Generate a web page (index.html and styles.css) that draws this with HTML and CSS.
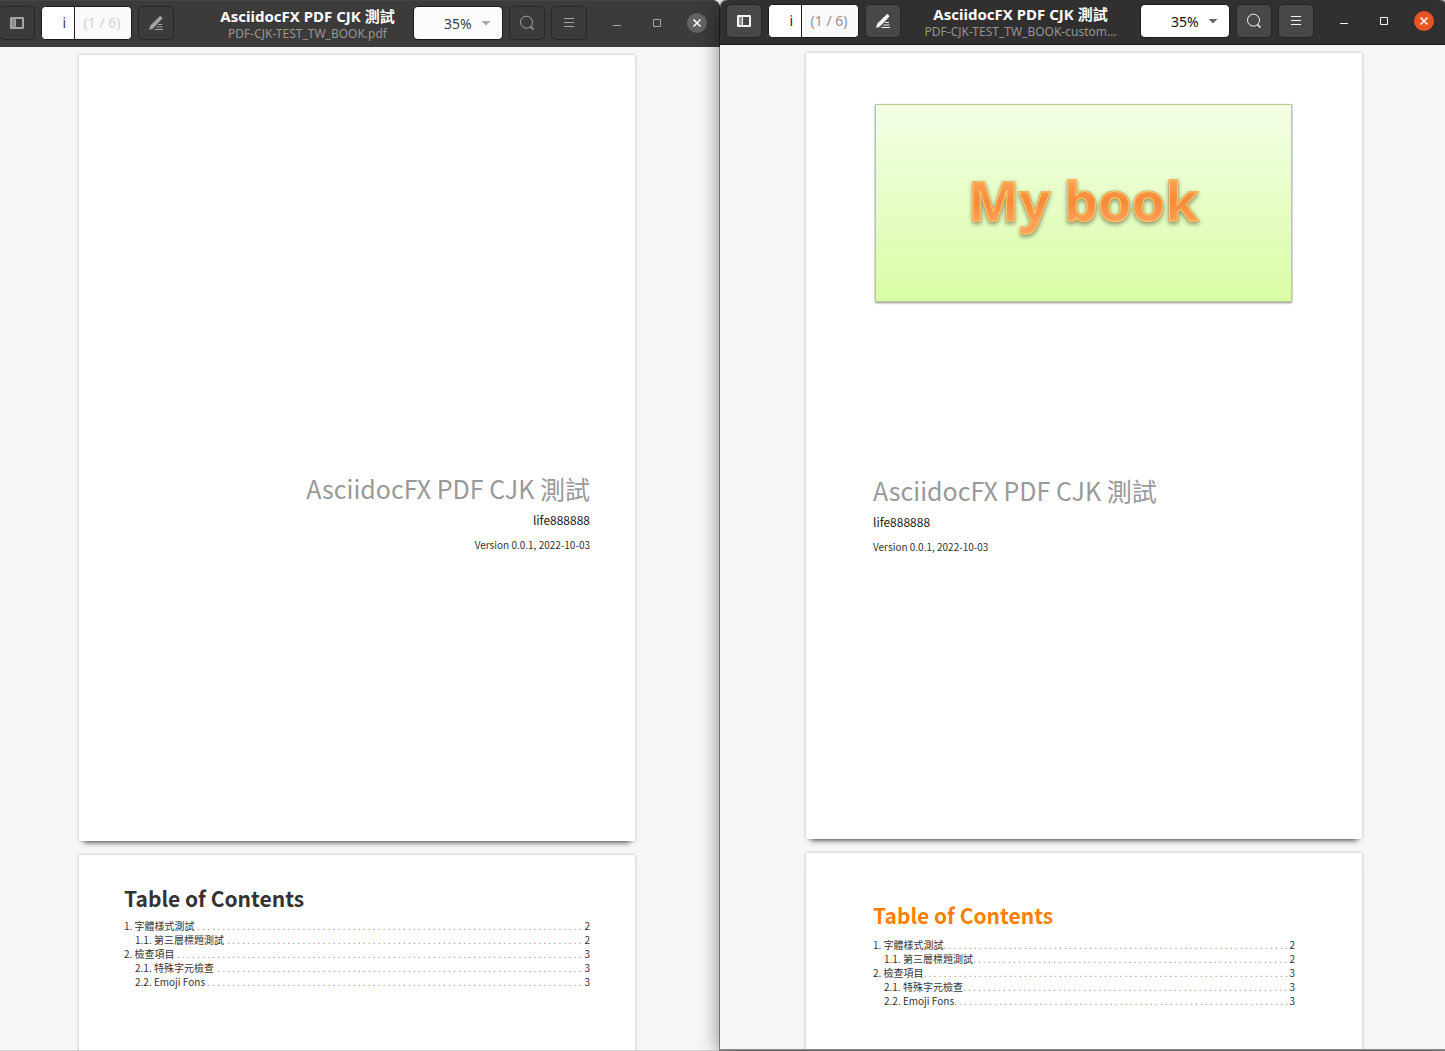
FILE: index.html
```html
<!DOCTYPE html>
<html lang="zh-Hant">
<head>
<meta charset="utf-8">
<title>AsciidocFX PDF CJK 測試</title>
<link rel="stylesheet" href="styles.css">
</head>
<body>
<svg width="0" height="0" class="sprite" aria-hidden="true">
  <symbol id="sidebar" viewBox="0 0 16 16">
    <path fill-rule="evenodd" d="M1 3q0-1 1-1h12q1 0 1 1v10q0 1-1 1H2q-1 0-1-1zM7 4v8h6V4z" fill="currentColor"/>
    <path d="M3 4h3v8H3z" class="sidebar-strip"/>
  </symbol>
  <symbol id="annotate" viewBox="0 0 16 16">
    <path d="M1 15l1.200-4.200L11.500 1.500q.8-.8 1.600 0l.9.900q.8.800 0 1.600L5 13.500z" fill="currentColor"/>
    <path d="M10 9.500h4M8.500 12h6M6.500 14.500h8.500" stroke="currentColor" fill="none"/>
  </symbol>
  <symbol id="search" viewBox="0 0 16 16">
    <circle cx="7.500" cy="7.200" r="6" stroke="currentColor" fill="none"/>
    <path d="M11.500 11.500l3 3" stroke="currentColor" stroke-width="1.500"/>
  </symbol>
  <symbol id="menu" viewBox="0 0 16 16">
    <path d="M3 3.500h10M3 7.500h10M3 11.500h10" stroke="currentColor"/>
  </symbol>
  <symbol id="minimize" viewBox="0 0 16 16"><path d="M4 10.500h8" stroke="currentColor"/></symbol>
  <symbol id="maximize" viewBox="0 0 16 16"><path d="M4.500 4.500h7v7h-7z" stroke="currentColor" fill="none"/></symbol>
  <symbol id="close" viewBox="0 0 16 16"><path d="M4.500 4.500l7 7M11.500 4.500l-7 7" stroke="currentColor" stroke-width="1.600"/></symbol>
</svg>
<div class="desktop">
  <main class="window inactive">
    <header class="bar">
      <button class="tool" aria-label="Side pane"><svg><use href="#sidebar"/></svg></button>
      <div class="pager"><input id="page-a" value="i" aria-label="Page"><label for="page-a">(1 / 6)</label></div>
      <button class="tool" aria-label="Annotate"><svg><use href="#annotate"/></svg></button>
      <div class="caption"><h1>AsciidocFX PDF CJK 測試</h1><p>PDF-CJK-TEST_TW_BOOK.pdf</p></div>
      <div class="zoom"><select aria-label="Zoom"><option>35%</option></select></div>
      <button class="tool" aria-label="Find"><svg><use href="#search"/></svg></button>
      <button class="tool" aria-label="Menu"><svg><use href="#menu"/></svg></button>
      <div class="controls">
        <button aria-label="Minimize"><svg><use href="#minimize"/></svg></button>
        <button aria-label="Maximize"><svg><use href="#maximize"/></svg></button>
        <button aria-label="Close"><span class="disc"><svg><use href="#close"/></svg></span></button>
      </div>
    </header>
    <div class="viewer">
      <article class="sheet title-sheet">
        <h2>AsciidocFX PDF CJK 測試</h2>
        <p class="author">life888888</p>
        <p class="version">Version 0.0.1, 2022-10-03</p>
      </article>
      <article class="sheet toc">
        <h2>Table of Contents</h2>
        <ol>
          <li><a href="#">1. 字體樣式測試</a><span class="dots">. . . . . . . . . . . . . . . . . . . . . . . . . . . . . . . . . . . . . . . . . . . . . . . . . . . . . . . . . . . . . . . . . . . . . . . . . . . . .</span><span>2</span></li>
          <li class="sub"><a href="#">1.1. 第三層標題測試</a><span class="dots">. . . . . . . . . . . . . . . . . . . . . . . . . . . . . . . . . . . . . . . . . . . . . . . . . . . . . . . . . . . . . . . . . . . . . . .</span><span>2</span></li>
          <li><a href="#">2. 檢查項目</a><span class="dots">. . . . . . . . . . . . . . . . . . . . . . . . . . . . . . . . . . . . . . . . . . . . . . . . . . . . . . . . . . . . . . . . . . . . . . . . . . . . . . . . .</span><span>3</span></li>
          <li class="sub"><a href="#">2.1. 特殊字元檢查</a><span class="dots">. . . . . . . . . . . . . . . . . . . . . . . . . . . . . . . . . . . . . . . . . . . . . . . . . . . . . . . . . . . . . . . . . . . . . . . . .</span><span>3</span></li>
          <li class="sub"><a href="#">2.2. Emoji Fons</a><span class="dots">. . . . . . . . . . . . . . . . . . . . . . . . . . . . . . . . . . . . . . . . . . . . . . . . . . . . . . . . . . . . . . . . . . . . . . . . . . .</span><span>3</span></li>
        </ol>
      </article>
    </div>
  </main>
  <section class="window active">
    <header class="bar">
      <button class="tool" aria-label="Side pane"><svg><use href="#sidebar"/></svg></button>
      <div class="pager"><input id="page-b" value="i" aria-label="Page"><label for="page-b">(1 / 6)</label></div>
      <button class="tool" aria-label="Annotate"><svg><use href="#annotate"/></svg></button>
      <div class="caption"><h1>AsciidocFX PDF CJK 測試</h1><p>PDF-CJK-TEST_TW_BOOK-custom…</p></div>
      <div class="zoom"><select aria-label="Zoom"><option>35%</option></select></div>
      <button class="tool" aria-label="Find"><svg><use href="#search"/></svg></button>
      <button class="tool" aria-label="Menu"><svg><use href="#menu"/></svg></button>
      <div class="controls">
        <button aria-label="Minimize"><svg><use href="#minimize"/></svg></button>
        <button aria-label="Maximize"><svg><use href="#maximize"/></svg></button>
        <button aria-label="Close"><span class="disc"><svg><use href="#close"/></svg></span></button>
      </div>
    </header>
    <div class="viewer">
      <article class="sheet title-sheet custom">
        <div class="cover">
          <svg viewBox="0 0 416 196" role="img" aria-label="My book">
            <defs>
              <linearGradient id="ink" x1="0" y1="0" x2="0" y2="1">
                <stop offset="0.250" stop-color="#ffa057"/><stop offset="0.520" stop-color="#f58a38"/><stop offset="0.800" stop-color="#ffa05a"/>
              </linearGradient>
            </defs>
            <text x="208" y="116" text-anchor="middle" class="wordart-edge">My book</text>
            <text x="208" y="116" text-anchor="middle" class="wordart">My book</text>
          </svg>
        </div>
        <h2>AsciidocFX PDF CJK 測試</h2>
        <p class="author">life888888</p>
        <p class="version">Version 0.0.1, 2022-10-03</p>
      </article>
      <article class="sheet toc custom">
        <h2>Table of Contents</h2>
        <ol>
          <li><a href="#">1. 字體樣式測試</a><span class="dots">. . . . . . . . . . . . . . . . . . . . . . . . . . . . . . . . . . . . . . . . . . . . . . . . . . . . . . . . . . . . . . . . . . . . .</span><span>2</span></li>
          <li class="sub"><a href="#">1.1. 第三層標題測試</a><span class="dots">. . . . . . . . . . . . . . . . . . . . . . . . . . . . . . . . . . . . . . . . . . . . . . . . . . . . . . . . . . . . . . .</span><span>2</span></li>
          <li><a href="#">2. 檢查項目</a><span class="dots">. . . . . . . . . . . . . . . . . . . . . . . . . . . . . . . . . . . . . . . . . . . . . . . . . . . . . . . . . . . . . . . . . . . . . . . . .</span><span>3</span></li>
          <li class="sub"><a href="#">2.1. 特殊字元檢查</a><span class="dots">. . . . . . . . . . . . . . . . . . . . . . . . . . . . . . . . . . . . . . . . . . . . . . . . . . . . . . . . . . . . . . . . .</span><span>3</span></li>
          <li class="sub"><a href="#">2.2. Emoji Fons</a><span class="dots">. . . . . . . . . . . . . . . . . . . . . . . . . . . . . . . . . . . . . . . . . . . . . . . . . . . . . . . . . . . . . . . . . . .</span><span>3</span></li>
        </ol>
      </article>
    </div>
  </section>
</div>
</body>
</html>
```
FILE: styles.css
```css
* { box-sizing: border-box; margin: 0; }
body { overflow: hidden; background: #f6f6f6; font-family: "Noto Sans", "Noto Sans CJK TC", sans-serif; }
.sprite { position: absolute; }

/* Both windows reach a little past the screen's side edges. */
.desktop { display: flex; height: 100vh; margin: 0 -2px 0 -7px; }
.window { display: flex; flex: 1; flex-direction: column; min-width: 0; background: #f6f6f6; }
.inactive { border-bottom: 1px solid #d4d4d4; }
.active {
  z-index: 1;
  margin-bottom: 1px;
  border-bottom: 1px solid #8c8c8c;
  border-radius: 8px 8px 0 0;
  box-shadow: 0 0 0 1px rgba(0, 0, 0, .4), 0 3px 20px rgba(0, 0, 0, .5);
}

.bar {
  display: flex;
  flex: none;
  align-items: center;
  gap: 6px;
  height: 45px;
  padding: 0 3px 3px 6px;
  border-bottom: 1px solid #1f1d1d;
  border-radius: 8px 8px 0 0;
  background: #322f30;
  color: #f4f4f2;
}
.inactive .bar { height: 47px; padding-top: 2px; border-bottom: 0; padding-bottom: 4px; background: #3d3b39; color: #a6a4a1; box-shadow: inset 0 1px #474543; }
.bar svg { display: block; width: 16px; height: 16px; }
.sidebar-strip { fill: #8d8c8a; }
.inactive .sidebar-strip { fill: #6b6967; }
button { padding: 0; border: 0; background: none; color: inherit; font: inherit; }
.tool {
  display: grid;
  place-items: center;
  flex: none;
  width: 36px;
  height: 34px;
  border: 1px solid #272525;
  border-radius: 5px;
  background: #4a4846;
}
.inactive .tool { border-color: #292826; background: #3d3b39; }

.pager, .zoom { display: flex; flex: none; height: 34px; overflow: hidden; border: 1px solid #1c1b1b; border-radius: 5px; background: #fff; font-size: 14px; }
.pager { width: 91px; }
.pager input { width: 33px; padding: 0 8px 0 0; border: 0; border-right: 1px solid #1c1b1b; background: #fff; color: #1a1a1a; font: inherit; text-align: right; }
.pager label { flex: 1; padding-right: 2px; background: #fafafa; color: #929292; line-height: 32px; text-align: center; }
.inactive .pager input { color: #3d3d3d; }
.inactive .pager label { color: #d2d2d2; }
.zoom { position: relative; width: 90px; }
.zoom select { width: 100%; padding: 2px 0 0 30px; border: 0; appearance: none; background: #fff; color: #111; font: inherit; }
.inactive .zoom select { background: #fcfcfc; color: #3d3d3d; }
.zoom::after { content: ""; position: absolute; top: 14px; right: 11px; width: 10px; height: 5px; background: #666; clip-path: polygon(0 0, 100% 0, 50% 100%); pointer-events: none; }
.inactive .zoom::after { background: #aaa; }

.caption { flex: 1; min-width: 0; padding-top: 5px; text-align: center; white-space: nowrap; }
.inactive .caption { padding-left: 28px; }
.caption h1 { color: #fff; font-size: 15px; font-weight: 700; line-height: 18px; }
.caption p { color: #979593; font-size: 12px; line-height: 18px; }
.controls { display: flex; margin-left: 4px; }
.controls button { display: grid; place-items: center; width: 40px; height: 34px; }
.disc { display: grid; place-items: center; width: 20px; height: 20px; border-radius: 50%; background: #e95420; color: #fff; }
.inactive .disc { background: #636363; }

.viewer { display: flex; flex: 1; flex-direction: column; align-items: center; gap: 14px; min-height: 0; overflow: hidden; padding: 8px 0 0 1px; }
.sheet {
  flex: none;
  width: 556px;
  height: 786px;
  padding: 0 45px;
  background: #fff;
  box-shadow: 0 0 3px rgba(0, 0, 0, .25), 0 7px 5px -5px rgba(0, 0, 0, .55);
  color: #333;
  font-family: "Noto Sans CJK TC", sans-serif;
  font-size: 10px;
}
.sheet.custom { padding: 0 67px; }
.title-sheet { padding-top: 413px; text-align: right; }
.title-sheet.custom { padding-top: 51px; text-align: left; }
.title-sheet h2 { color: #999; font-size: 25px; font-weight: 400; line-height: 40px; }
.author { margin-top: 2px; color: #222; font-size: 12px; line-height: 20px; }
.version { margin-top: 5px; line-height: 20px; }

.cover { height: 198px; margin: 0 3px 168px 2px; border: 1px solid #b5cd8e; background: linear-gradient(#f4ffe6, #d9fda5); box-shadow: 0 1px 2px rgba(0, 0, 0, .45); }
.cover svg { display: block; width: 100%; height: 100%; }
.wordart, .wordart-edge { font: 700 54px "Noto Sans", sans-serif; }
.wordart { fill: url(#ink); stroke: #ffcb66; stroke-width: 1px; }
.wordart-edge { fill: #e58f45; stroke: #d99a52; stroke-width: 2px; stroke-linejoin: round; filter: drop-shadow(0 2px 2px rgba(0, 0, 0, .4)); }

.toc h2 { padding-top: 26px; font-size: 21px; font-weight: 700; line-height: 34px; }
.toc ol { margin-top: 4px; padding: 0; list-style: none; }
.toc li { display: flex; line-height: 14px; }
.toc .sub { padding-left: 11px; }
.toc a { color: inherit; text-decoration: none; }
.dots { flex: 1; min-width: 0; overflow: hidden; padding-right: 3px; color: #999; text-align: right; white-space: nowrap; }
.toc.custom h2 { padding-top: 45px; color: #ff8000; }
.toc.custom ol { margin-top: 6px; }
```
